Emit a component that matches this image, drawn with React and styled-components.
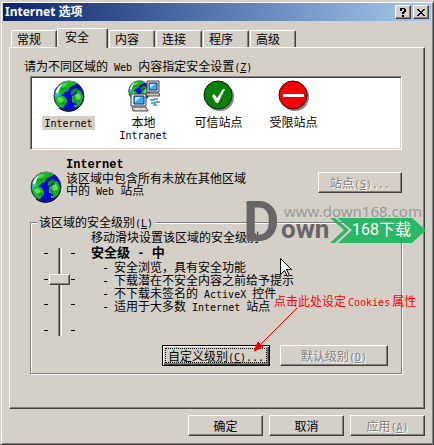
import React, { useState } from "react"
import styled, { createGlobalStyle } from "styled-components"

const GlobalStyle = createGlobalStyle`
    * {
        box-sizing: border-box;
    }
    body {
        margin: 0;
        background: #d4d0c8;
        color: #000;
        font-family: "Noto Sans CJK SC", sans-serif;
        font-size: 12px;
        line-height: 12px;
    }
    button {
        font: inherit;
        color: inherit;
    }
`

function GlobeShapes() {
    return (
        <>
            <circle cx="16" cy="16" r="15" fill="#0808c8" />
            <path d="M10 6h6v4h4v5h-4v5h4v7h-5v-5h-4v-7h-2z" fill="#0000ff" opacity=".6" />
            <path d="M2 13l3-6 5-4 5-2h6l3 2-2 2-3 1-3 2-1 3-3 1-3 3-4 1-3-1z" fill="#10b818" />
            <path d="M7 6l4-3h4l-3 4-3 1z" fill="#40e040" />
            <path d="M1 14l4-1 3 2-2 4-4 1z" fill="#30b8d8" />
            <path d="M2 12l3-5 5-4-3 5-2 6z" fill="#e8f8f8" />
            <path d="M2 18l5-3 4 1 3 4v3l-4 5-4-1-3-4z" fill="#18b820" />
            <path d="M4 18l4-1 3 3-3 3-3-2z" fill="#58e848" />
            <path d="M18 11l3-2 3-1 1 3-3 1-1 2-3 1z" fill="#109018" />
            <path d="M19 16l4-2 2-4 3 1 2 5-1 7-4 4-2-4-4-1z" fill="#18b020" />
            <path d="M22 15l4-2 2 4-3 5-2-3z" fill="#60e050" />
            <path d="M21 25h3v2h-3z" fill="#18c020" />
            <path d="M8 9h1M10 9h1M12 9h1M9 8h1M11 8h1M9 24h1M11 24h1M8 23h1M10 23h1M12 23h1M21 20h1M23 20h1M25 20h1M22 21h1M24 21h1M26 21h1" stroke="#006830" />
            <circle cx="16" cy="16" r="15" fill="none" stroke="#203848" />
            <path d="M4 7A15 15 0 0 1 16 1a15 15 0 0 1 8 2" fill="none" stroke="#a0a8a8" />
            <path d="M6 28a15 15 0 0 0 24-8" fill="none" stroke="#000" />
        </>
    )
}

function Globe() {
    return (
        <Icon viewBox="0 0 32 32" aria-hidden="true">
            <GlobeShapes />
        </Icon>
    )
}

function Intranet() {
    return (
        <Icon viewBox="0 0 32 32" aria-hidden="true">
            <g transform="scale(.7)">
                <GlobeShapes />
            </g>
            <path d="M19 1h12v11H19z" fill="#e8e4d8" stroke="#404040" />
            <path d="M21 3h8v7h-8z" fill="#40b0f0" stroke="#0030a0" />
            <path d="M22 4h5l-5 4z" fill="#c0f0ff" />
            <path d="M18 13h13l1 3H19z" fill="#c8c4b8" stroke="#505050" />
            <path d="M20 17h12v9H20z" fill="#fff" />
            <path d="M22 20h4v-1h4M23 23h5v-1h4M25 25h4" stroke="#084878" fill="none" />
            <path d="M24 20h3M26 22h4" stroke="#20b8d0" />
            <path d="M3 14h15v12H3z" fill="#f0ece0" stroke="#404040" />
            <path d="M6 16h10v8H6z" fill="#38a8f0" stroke="#0030a0" />
            <path d="M7 17h6l-6 5z" fill="#b8f0ff" />
            <path d="M4 27h14l2 4H5z" fill="#c8c4b8" stroke="#505050" />
            <path d="M7 29h5M14 29h3" stroke="#fff" />
        </Icon>
    )
}

function Trusted() {
    return (
        <Icon viewBox="0 0 32 32" aria-hidden="true">
            <circle cx="17" cy="17" r="14" fill="#808080" />
            <circle cx="15" cy="15" r="14" fill="#088008" stroke="#002800" />
            <path d="M9 16l2-2 3 4 6-9h2l-7 14h-2z" fill="#fff" />
        </Icon>
    )
}

function Restricted() {
    return (
        <Icon viewBox="0 0 32 32" aria-hidden="true">
            <circle cx="17" cy="17" r="14" fill="#808080" />
            <circle cx="15" cy="15" r="14" fill="#f80000" stroke="#400000" />
            <path d="M5 14h21v3H5z" fill="#fff" />
        </Icon>
    )
}

const tabs = ["常规", "安全", "内容", "连接", "程序", "高级"]

const zones = [
    { id: "internet", icon: <Globe />, label: <Latin>Internet</Latin> },
    { id: "intranet", icon: <Intranet />, label: <>本地<br /><Latin>Intranet</Latin></> },
    { id: "trusted", icon: <Trusted />, label: "可信站点" },
    { id: "restricted", icon: <Restricted />, label: "受限站点" },
]

function Latin({ children }) {
    return <Mono>{children}</Mono>
}

function Key({ children }) {
    return <Mono>(<u>{children}</u>)</Mono>
}

function Ticks() {
    return (
        <TickColumn aria-hidden="true">
            <Tick /><Tick /><Tick /><Tick />
        </TickColumn>
    )
}

export default function App() {
    const [tab, setTab] = useState("安全")
    const [zone, setZone] = useState("internet")
    const [level, setLevel] = useState(2)

    return (
        <Window>
            <GlobalStyle />
            <TitleBar>
                <Title>Internet 选项</Title>
                <TitleButton aria-label="帮助">
                    <svg width="8" height="9" viewBox="0 0 8 9" shapeRendering="crispEdges">
                        <path d="M1 0h5v1h1v3H6v1H5v1H3V4h1V3h1V1H3v2H1zM3 7h2v2H3z" />
                    </svg>
                </TitleButton>
                <TitleButton aria-label="关闭">
                    <svg width="8" height="7" viewBox="0 0 8 7" shapeRendering="crispEdges">
                        <path d="M0 0h2v1h1v1h2V1h1V0h2v1H7v1H6v1H5v1h1v1h1v1h1v1H6V6H5V5H3v1H2v1H0V6h1V5h1V4h1V3H2V2H1V1H0z" />
                    </svg>
                </TitleButton>
            </TitleBar>
            <Sheet>
                <TabList role="tablist">
                    {tabs.map((name) => (
                        <Tab key={name} role="tab" aria-selected={name === tab} $active={name === tab} onClick={() => setTab(name)}>
                            {name}
                        </Tab>
                    ))}
                </TabList>
                <Panel role="tabpanel">
                    <ZoneLabel id="zone-label">
                        请为不同区域的<Latin> Web </Latin>内容指定安全设置<Key>Z</Key>
                    </ZoneLabel>
                    <Body>
                        <ZoneList role="listbox" aria-labelledby="zone-label">
                            {zones.map((z) => (
                                <Zone key={z.id} role="option" aria-selected={z.id === zone} onClick={() => setZone(z.id)}>
                                    {z.icon}
                                    <ZoneName $selected={z.id === zone}>{z.label}</ZoneName>
                                </Zone>
                            ))}
                        </ZoneList>
                        <ZoneInfo>
                            <GlobeSlot><Globe /></GlobeSlot>
                            <ZoneText>
                                <Heading><Strong>Internet</Strong></Heading>
                                该区域中包含所有未放在其他区域<br />
                                中的<Latin> Web </Latin>站点
                            </ZoneText>
                            <SitesButton disabled>站点<Key>S</Key><Latin>...</Latin></SitesButton>
                        </ZoneInfo>
                        <Group>
                            <Legend>该区域的安全级别<Key>L</Key></Legend>
                            <LevelRow>
                                <SliderBox>
                                    <Ticks />
                                    <Slider
                                        type="range"
                                        min="0"
                                        max="3"
                                        value={level}
                                        aria-label="该区域的安全级别"
                                        onChange={(e) => setLevel(Number(e.target.value))}
                                    />
                                    <Ticks />
                                </SliderBox>
                                <LevelText>
                                    <Line>移动滑块设置该区域的安全级别</Line>
                                    <LevelName>安全级<Strong> - </Strong>中</LevelName>
                                    <LevelList>
                                        <li>安全浏览，具有安全功能</li>
                                        <li>下载潜在不安全内容之前给予提示</li>
                                        <li>不下载未签名的<Latin> ActiveX </Latin>控件</li>
                                        <li>适用于大多数<Latin> Internet </Latin>站点</li>
                                    </LevelList>
                                </LevelText>
                            </LevelRow>
                            <LevelButtons>
                                <DefaultButton>
                                    <Focus>自定义级别<Key>C</Key><Latin>...</Latin></Focus>
                                </DefaultButton>
                                <WideButton disabled>默认级别<Key>D</Key></WideButton>
                            </LevelButtons>
                        </Group>
                    </Body>
                </Panel>
                <Actions>
                    <Button>确定</Button>
                    <Button>取消</Button>
                    <Button disabled>应用<Key>A</Key></Button>
                </Actions>
            </Sheet>

            <Watermark>
                <BigD>D</BigD>
                <Own>own</Own>
                <Site>www.down168.com</Site>
                <Ribbon viewBox="0 0 96 25" aria-hidden="true">
                    <path d="M0 0h5l14 12L5 25H0l14-13z" fill="#2ab866" />
                    <path d="M7 0h75l14 12-14 13H8l14-13z" fill="#2ab866" />
                </Ribbon>
                <RibbonText>168下载</RibbonText>
            </Watermark>
            <Note>点击此处设定<NoteLatin>Cookies</NoteLatin>属性</Note>
            <Arrow viewBox="0 0 44 44" aria-hidden="true">
                <path d="M43 0L6 37" stroke="#f00" />
                <path d="M0 43l4-9 5 5z" fill="#f00" stroke="#f00" />
            </Arrow>
            <Cursor viewBox="0 0 12 20" aria-hidden="true">
                <path d="M.5 .5v16l4-4 3 6 2-1-3-6h5z" fill="#fff" stroke="#000" />
            </Cursor>
        </Window>
    )
}

const Window = styled.main`
    position: relative;
    margin-top: 1px;
    padding: 1px 2px 2px;
    border: 1px solid;
    border-color: #d4d0c8 #404040 #404040 #d4d0c8;
    box-shadow: inset 1px 1px #fff, inset -1px -1px #808080;
`
const TitleBar = styled.header`
    display: flex;
    align-items: center;
    gap: 2px;
    height: 18px;
    padding: 0 2px;
    background: linear-gradient(to right, #0a246a, #a6caf0);
`
const Title = styled.h1`
    flex: 1;
    margin: 0;
    color: #fff;
    font: bold 12px/18px "Noto Sans", "Noto Sans CJK SC", sans-serif;
`
const Button = styled.button`
    width: 75px;
    height: 21px;
    padding: 0;
    background: #d4d0c8;
    border: 1px solid;
    border-color: #fff #404040 #404040 #fff;
    box-shadow: inset -1px -1px #808080;
    white-space: nowrap;

    &:disabled {
        color: #808080;
        text-shadow: 1px 1px #fff;
    }
`
const TitleButton = styled(Button)`
    display: flex;
    align-items: center;
    justify-content: center;
    width: 16px;
    height: 14px;
`
const SitesButton = styled(Button)`
    width: 84px;
    margin: 16px 0 0 auto;
`
const WideButton = styled(Button)`
    width: 108px;
`
const DefaultButton = styled(WideButton)`
    padding: 2px;
    border-color: #000;
    box-shadow: inset 1px 1px #fff, inset -1px -1px #404040, inset -2px -2px #808080;
`
const Focus = styled.span`
    display: block;
    height: 15px;
    border: 1px dotted #000;
    line-height: 13px;
`
const Mono = styled.span`
    font-family: "DejaVu Sans Mono", monospace;
    font-size: 10px;
    line-height: 0;
    white-space: pre;
`
const Strong = styled.b`
    font-family: "Liberation Mono", monospace;
    font-size: 12px;
    line-height: 0;
    white-space: pre;
`
const Icon = styled.svg`
    display: block;
    width: 32px;
    height: 32px;
`
const Sheet = styled.div`
    padding: 7px 6px 6px;
`
const TabList = styled.div`
    display: flex;
    align-items: flex-end;
    gap: 1px;
    padding-left: 2px;
`
const Tab = styled.button`
    position: relative;
    width: ${(p) => (p.$active ? 51 : 46)}px;
    height: ${(p) => (p.$active ? 20 : 17)}px;
    margin: ${(p) => (p.$active ? "0 0 -1px -1px" : "0")};
    padding: ${(p) => (p.$active ? "0 0 3px 7px" : "0 0 0 5px")};
    z-index: ${(p) => (p.$active ? 1 : 0)};
    background: #d4d0c8;
    border: 1px solid;
    border-color: #fff #404040 transparent #fff;
    border-bottom: 0;
    border-radius: 2px 2px 0 0;
    box-shadow: inset -1px 0 #808080;
    text-align: left;
`
const Panel = styled.section`
    padding: 10px 22px 34px 14px;
    border: 1px solid;
    border-color: #fff #404040 #404040 #fff;
    box-shadow: inset -1px -1px #808080;
`
const ZoneLabel = styled.div`
    line-height: 16px;
`
const Body = styled.div`
    margin: 2px 0 0 6px;
`
const ZoneList = styled.div`
    display: flex;
    padding: 3px 0 7px;
    background: #fff;
    border: 1px solid;
    border-color: #808080 #fff #fff #808080;
    box-shadow: inset 1px 1px #404040, inset -1px -1px #d4d0c8;
`
const Zone = styled.button`
    display: flex;
    flex-direction: column;
    align-items: center;
    gap: 4px;
    width: 75px;
    height: 62px;
    padding: 0;
    background: none;
    border: 0;
`
const ZoneName = styled.span`
    padding: 0 2px 2px;
    background: ${(p) => (p.$selected ? "#d4d0c8" : "none")};
`
const ZoneInfo = styled.div`
    display: flex;
    align-items: flex-start;
    gap: 4px;
    margin-top: 6px;
`
const GlobeSlot = styled.div`
    padding-top: 15px;
`
const ZoneText = styled.div`
    white-space: nowrap;
`
const Heading = styled.h2`
    margin: 0 0 2px;
    font-size: 12px;
    line-height: 14px;
`
const Group = styled.fieldset`
    min-width: 0;
    margin: 11px 0 0;
    padding: 0 13px 7px;
    border: 1px solid #808080;
    box-shadow: 1px 1px #fff, inset 1px 1px #fff;
`
const Legend = styled.legend`
    margin-left: -7px;
    padding: 0 2px;
    background: #d4d0c8;
    line-height: 16px;
`
const LevelRow = styled.div`
    display: flex;
    gap: 16px;
`
const SliderBox = styled.div`
    display: flex;
    gap: 1px;
    padding-top: 18px;
`
const TickColumn = styled.div`
    display: flex;
    flex-direction: column;
    justify-content: space-between;
    width: 4px;
    height: 88px;
    padding: 5px 0;
`
const Tick = styled.i`
    height: 1px;
    background: #000;
`
const Slider = styled.input`
    appearance: none;
    writing-mode: vertical-lr;
    direction: rtl;
    width: 21px;
    height: 88px;
    margin: 0;
    background: linear-gradient(to right, #808080 1px, #404040 1px 2px, #d4d0c8 2px 3px, #fff 3px) center / 4px 100% no-repeat;

    &::-webkit-slider-thumb {
        appearance: none;
        width: 21px;
        height: 11px;
        background: #d4d0c8;
        border: 1px solid;
        border-color: #fff #404040 #404040 #fff;
        box-shadow: inset -1px -1px #808080;
    }
`
const LevelText = styled.div`
    white-space: nowrap;
`
const Line = styled.div`
    line-height: 14px;
`
const LevelName = styled.div`
    margin: 1px 0 2px;
    font-size: 13px;
    font-weight: bold;
    line-height: 14px;
`
const LevelList = styled.ul`
    margin: 0;
    padding: 0 0 0 23px;
    list-style: none;

    li::before {
        content: "-";
        display: inline-block;
        width: 12px;
        margin-left: -12px;
        font-family: "DejaVu Sans Mono", monospace;
    }
`
const LevelButtons = styled.div`
    display: flex;
    justify-content: flex-end;
    gap: 10px;
    margin-top: 9px;
`
const Actions = styled.footer`
    display: flex;
    justify-content: flex-end;
    gap: 6px;
    margin-top: 6px;
`
const Watermark = styled.div`
    position: absolute;
    top: 196px;
    left: 246px;
    width: 180px;
    height: 48px;
    font-family: Roboto, "Noto Sans CJK SC", sans-serif;
    color: #666;
    pointer-events: none;
`
const BigD = styled.b`
    position: absolute;
    top: 4px;
    left: -4px;
    font-size: 56px;
    line-height: 40px;
`
const Own = styled.b`
    position: absolute;
    top: 18px;
    left: 34px;
    font-size: 26px;
    line-height: 26px;
`
const Site = styled.span`
    position: absolute;
    top: 4px;
    left: 37px;
    color: #999;
    font: 15px/18px "Noto Sans", sans-serif;
`
const Ribbon = styled.svg`
    position: absolute;
    top: 20px;
    left: 83px;
    width: 96px;
    height: 25px;
`
const RibbonText = styled.span`
    position: absolute;
    top: 22px;
    left: 105px;
    color: #fff;
    font-size: 16px;
    line-height: 20px;
    white-space: nowrap;
`
const Note = styled.span`
    position: absolute;
    top: 292px;
    left: 273px;
    color: #f00;
    line-height: 14px;
    white-space: nowrap;
`
const NoteLatin = styled(Mono)`
    padding: 0 2px;
`
const Arrow = styled.svg`
    position: absolute;
    top: 306px;
    left: 253px;
    width: 44px;
    height: 44px;
    pointer-events: none;
`
const Cursor = styled.svg`
    position: absolute;
    top: 256px;
    left: 279px;
    width: 12px;
    height: 20px;
    pointer-events: none;
`
